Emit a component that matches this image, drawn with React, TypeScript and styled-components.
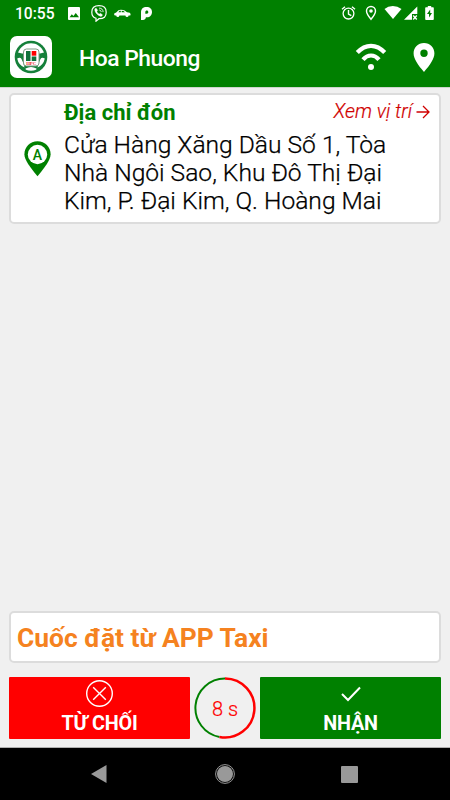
import React from "react";
import styled, { createGlobalStyle } from "styled-components";

const GlobalStyle = createGlobalStyle`
  * { box-sizing: border-box; }
  body { margin: 0; background: #f0f0f0; font-family: Roboto, "Noto Sans", sans-serif; }
  svg { display: block; flex: none; }
`;

const Screen = styled.div`
  width: 450px;
  height: 800px;
  display: flex;
  flex-direction: column;
  background: #f0f0f0;
  overflow: hidden;
`;

const StatusBar = styled.div`
  height: 27px;
  display: flex;
  align-items: flex-start;
  padding: 5px 15px 0 15px;
  background: #008000;
  color: #fff;
`;

const Clock = styled.span`
  width: 40px;
  font-size: 15.6px;
  line-height: 18px;
  font-weight: 500;
  white-space: nowrap;
`;

const Slot = styled.span<{ $gap: number }>`
  margin-left: ${(p) => p.$gap}px;
`;

const AppBar = styled.header`
  height: 60px;
  display: flex;
  align-items: center;
  padding: 0 15px 0 10px;
  background: #008000;
  color: #fff;
`;

const Logo = styled.div`
  width: 42px;
  height: 42px;
  border-radius: 7px;
  background: #fff;
`;

const Title = styled.h1`
  flex: 1;
  margin: 3px 0 0 27px;
  font-size: 22.8px;
  line-height: 28px;
  font-weight: 500;
  letter-spacing: -0.45px;
`;

const BarIcons = styled.div`
  display: flex;
  align-items: center;
  gap: 26px;
`;

const Main = styled.main`
  flex: 1;
  display: flex;
  flex-direction: column;
  padding: 5px 9px 9px;
  border-top: 1px solid #ccd6cc;
  border-bottom: 1px solid #b0b0b0;
`;

const Card = styled.section<{ $height: number }>`
  height: ${(p) => p.$height}px;
  display: flex;
  background: #fff;
  border: 2px solid #dcdcdc;
  border-radius: 5px;
`;

const Marker = styled.div`
  width: 53px;
  padding: 46px 0 0 13px;
`;

const Address = styled.div`
  flex: 1;
`;

const AddressHead = styled.div`
  display: flex;
  justify-content: space-between;
  height: 35px;
  padding-right: 9px;
`;

const Label = styled.h2`
  margin: 4px 0 0;
  font-size: 22px;
  line-height: 28px;
  font-weight: 700;
  color: #008000;
`;

const MapLink = styled.a`
  display: flex;
  gap: 4px;
  margin-top: 4px;
  font-size: 19.8px;
  line-height: 26px;
  font-weight: 300;
  font-style: italic;
  color: #d00000;
  -webkit-text-stroke: 0.2px #d00000;
`;

const Arrow = styled.span`
  padding-top: 6px;
`;

const AddressText = styled.p`
  margin: 0;
  padding-top: 1px;
  font-size: 24.6px;
  line-height: 28px;
  font-weight: 300;
  color: #000;
  white-space: nowrap;
  -webkit-text-stroke: 0.25px #000;
`;

const Line = styled.span`
  display: block;
`;

const Spacer = styled.div`
  flex: 1;
`;

const Notice = styled.p`
  margin: 0;
  padding: 8px 0 0 6px;
  font-size: 26.4px;
  line-height: 34px;
  font-weight: 700;
  color: #f58220;
`;

const Actions = styled.div`
  display: grid;
  grid-template-columns: 181px 1fr 181px;
  height: 61px;
  margin-top: 14px;
`;

const ActionButton = styled.button<{ $color: string }>`
  display: flex;
  flex-direction: column;
  align-items: center;
  justify-content: space-between;
  padding: 3px 0 2px;
  border: 0;
  border-radius: 1px;
  background: ${(p) => p.$color};
  color: #fff;
  font: 700 19.8px/26px Roboto, "Noto Sans", sans-serif;
  letter-spacing: -0.2px;
`;

const Timer = styled.div`
  display: grid;
  place-items: center;
  & > * { grid-area: 1 / 1; }
`;

const Seconds = styled.span`
  padding-top: 2px;
  font-size: 20px;
  font-weight: 300;
  color: #f00;
  -webkit-text-stroke: 0.2px #f00;
`;

const NavBar = styled.nav`
  height: 52px;
  display: grid;
  grid-template-columns: 198px 54px 194px;
  align-items: center;
  justify-items: center;
  background: #000;
`;

const StatusIcons = () => (
  <>
    <Slot $gap={13}>
      <svg width="13" height="16" viewBox="0 0 13 16">
        <path fill="#fff" fillRule="evenodd" d="M1 2h10q1 0 1 1v11q0 1-1 1H1q-1 0-1-1V3q0-1 1-1ZM1.6 12.3H11L7.8 8 5.4 11 3.8 9.2Z" />
      </svg>
    </Slot>
    <Slot $gap={10}>
      <svg width="16" height="17" viewBox="0 0 16 17" fill="none" stroke="#fff">
        <path strokeWidth="1.2" d="M8 .7c5 0 7.200 1.800 7.200 6.500s-2.200 6.500-7.200 6.500L5 16.200v-3C2 12.300.8 10.800.8 7.200.8 2.500 3 .7 8 .7Z" />
        <path fill="#fff" strokeWidth=".4" d="m4.200 3.500 1-.3 1.400 2-.8 1.200c.4 1.300 1.300 2.200 2.600 2.700l1-.8 2 1.400c0 1-.8 1.700-1.500 1.700C7 10.700 4 7.500 3.700 4.700Z" />
        <path strokeWidth=".9" d="M8.100 3.100c2.600.1 4 1.600 4 4M8.300 5c1.200.1 1.800.8 1.900 2" />
      </svg>
    </Slot>
    <Slot $gap={7}>
      <svg width="17" height="16" viewBox="0 0 17 16" fill="#fff">
        <path fillRule="evenodd" d="M.2 8.400 2.200 7.500 4.500 5.200Q5 4.700 7 4.700q2.300 0 3.600.8l2.400 1.800q3.500.2 3.600 1.900l-.3 1.400H1L.2 10ZM4.300 7.300h2.500V5.800H5.600ZM7.700 5.800v1.500H11L9.500 6.100Z" />
        <circle cx="3.8" cy="10.600" r="1.500" /><circle cx="13" cy="10.600" r="1.500" />
      </svg>
    </Slot>
    <Slot $gap={10}>
      <svg width="12" height="16" viewBox="0 0 12 16">
        <path fill="#fff" fillRule="evenodd" d="M0 15V7.500C0 3.800 2.100 2 5.600 2 9 2 11 4 11 7s-2 5.300-5 5.300H4.900C4.700 14.300 3.500 15 2 15ZM4.300 8.800h1.500c1 0 1.500-.700 1.500-1.700s-.6-1.700-1.500-1.700-1.500.7-1.500 1.700Z" />
      </svg>
    </Slot>
    <Slot $gap={188}>
      <svg width="15" height="16" viewBox="0 0 15 16" fill="none" stroke="#fff">
        <circle cx="7.500" cy="8.600" r="5.400" strokeWidth="1.300" />
        <path strokeWidth="1.400" d="m1 4.200 3-2.500M14 4.200l-3-2.500M7.500 5v4l2.800 1.700" />
      </svg>
    </Slot>
    <Slot $gap={9}>
      <svg width="12" height="16" viewBox="0 0 12 16" fill="none" stroke="#fff">
        <path strokeWidth="1.400" d="M6 14.300C3.200 11 1.500 8.300 1.500 6a4.500 4.500 0 0 1 9 0c0 2.300-1.700 5-4.500 8.300Z" />
        <circle cx="6" cy="6" r="1.800" fill="#fff" stroke="none" />
      </svg>
    </Slot>
    <Slot $gap={7}>
      <svg width="18" height="16" viewBox="0 0 18 16">
        <path fill="#fff" d="M.5 4Q4 1 8.800 1t8.700 3L9 14Z" />
      </svg>
    </Slot>
    <Slot $gap={2}>
      <svg width="14" height="16" viewBox="0 0 14 16">
        <path fill="#fff" d="M0 14.800 13.300 1.500V9H8v5.800Z" />
        <path stroke="#fff" strokeWidth="1.400" d="m9.200 10.600 3.600 3.800M12.800 10.600l-3.600 3.800" />
      </svg>
    </Slot>
    <Slot $gap={7}>
      <svg width="9" height="16" viewBox="0 0 9 16">
        <path fill="#fff" fillRule="evenodd" d="M2.800 1h3.400v1.200H8q.8 0 .8.800v11q0 .9-.8.900H1q-.8 0-.8-.900V3q0-.8.8-.800h1.800ZM5.200 4.500 2 9h2v3.600L7 8H5.200Z" />
      </svg>
    </Slot>
  </>
);

const SteeringLogo = () => (
  <svg width="42" height="42" viewBox="0 0 42 42">
    <circle cx="21" cy="21" r="16.300" fill="#15803a" />
    <path fill="#fff" d="M8 16.500C10.500 10.500 15.500 7.200 21 7.200s10.500 3.300 13 9.300l-4 1H12Z" />
    <path fill="#fff" d="M7.200 22.500q3-1.500 4.300.5 2 3.500 3 8.500Q8.500 29 7.200 22.500ZM34.800 22.500q-3-1.500-4.300.5-2 3.500-3 8.500 6-2.500 7.300-9ZM15.500 32.500q5.500-3 11 0 .5 2-5.500 2.300-6-.3-5.500-2.300Z" />
    <rect x="13.500" y="13" width="15.500" height="17" rx="3" fill="#fff" stroke="#7d9b83" />
    <path fill="#11713b" d="M16 15h4.500v10H16ZM21.700 20.500h4.600V25h-4.600Z" />
    <path fill="#f00" d="M21.700 15h4.600v4.700h-4.600Z" />
    <text x="21.200" y="29.300" fill="#e22" fontFamily="Liberation Serif, serif" fontSize="4.800" fontWeight="700" textAnchor="middle">HPC</text>
  </svg>
);

export default function App() {
  return (
    <>
      <GlobalStyle />
      <Screen>
        <StatusBar>
          <Clock>10:55</Clock>
          <StatusIcons />
        </StatusBar>
        <AppBar>
          <Logo><SteeringLogo /></Logo>
          <Title>Hoa Phuong</Title>
          <BarIcons>
            <svg width="32" height="28" viewBox="0 0 32 28" fill="none" stroke="#fff">
              <path strokeWidth="4.200" d="M2.300 9.500Q8.500 2.800 16 2.800t13.700 6.700M8 16.600Q11.500 12.500 16 12.500t8 4.100" />
              <circle cx="16" cy="24" r="3" fill="#fff" stroke="none" />
            </svg>
            <svg width="22" height="29" viewBox="0 0 22 29">
              <path fill="#fff" fillRule="evenodd" d="M11 0C5 0 .6 4.400.6 10.300.6 16 5 22 11 29c6-7 10.400-13 10.400-18.700C21.400 4.400 17 0 11 0Zm0 6.500a3.700 3.700 0 1 1 0 7.400 3.700 3.700 0 0 1 0-7.400Z" />
            </svg>
          </BarIcons>
        </AppBar>
        <Main>
          <Card $height={131}>
            <Marker>
              <svg width="27" height="36" viewBox="0 0 27 36">
                <path fill="#008000" d="M13.500.2C6 .2.400 6 .4 13.200.4 19 6 26 13.500 35.300 21 26 26.600 19 26.600 13.200 26.600 6 21 .2 13.500.2Z" />
                <circle cx="13.500" cy="13.500" r="9.700" fill="#fff" />
                <text x="13.500" y="18.500" fill="#008000" fontFamily="Roboto, sans-serif" fontSize="14" fontWeight="500" textAnchor="middle">A</text>
              </svg>
            </Marker>
            <Address>
              <AddressHead>
                <Label>Địa chỉ đón</Label>
                <MapLink>
                  Xem vị trí
                  <Arrow>
                    <svg width="14" height="14" viewBox="0 0 14 14" fill="none" stroke="#d00000" strokeWidth="1.300">
                      <path d="M.5 7h12M7 1l6 6-6 6" />
                    </svg>
                  </Arrow>
                </MapLink>
              </AddressHead>
              <AddressText>
                <Line>Cửa Hàng Xăng Dầu Số 1, Tòa</Line>
                <Line>Nhà Ngôi Sao, Khu Đô Thị Đại</Line>
                <Line>Kim, P. Đại Kim, Q. Hoàng Mai</Line>
              </AddressText>
            </Address>
          </Card>
          <Spacer />
          <Card $height={52}>
            <Notice>Cuốc đặt từ APP Taxi</Notice>
          </Card>
          <Actions>
            <ActionButton $color="#ff0000">
              <svg width="28" height="28" viewBox="0 0 28 28" fill="none" stroke="#fff" strokeWidth="1.400">
                <circle cx="13.500" cy="13.500" r="12.800" />
                <path d="m7.200 7.200 12.600 12.600M19.800 7.200 7.200 19.800" />
              </svg>
              TỪ CHỐI
            </ActionButton>
            <Timer>
              <svg width="62" height="62" viewBox="0 0 62 62" fill="none">
                <path stroke="#008000" strokeWidth="2" d="M31 1.500A29.500 29.500 0 0 0 25.500 60" />
                <path stroke="#f00" strokeWidth="2.500" d="M31 1.500A29.500 29.500 0 1 1 25.500 60" />
              </svg>
              <Seconds>8 s</Seconds>
            </Timer>
            <ActionButton $color="#008000">
              <svg width="20" height="28" viewBox="0 0 20 28" fill="none" stroke="#fff" strokeWidth="2">
                <path d="m1 14 6 6L19 7.500" />
              </svg>
              NHẬN
            </ActionButton>
          </Actions>
        </Main>
        <NavBar>
          <svg width="16" height="20" viewBox="0 0 16 20"><path fill="#999" d="M15.500 1v18L0 10Z" /></svg>
          <svg width="20" height="20" viewBox="0 0 20 20">
            <circle cx="10" cy="10" r="8" fill="#999" /><circle cx="10" cy="10" r="9.400" fill="none" stroke="#999" />
          </svg>
          <svg width="17" height="17" viewBox="0 0 17 17"><rect width="17" height="17" rx="1" fill="#999" /></svg>
        </NavBar>
      </Screen>
    </>
  );
}
